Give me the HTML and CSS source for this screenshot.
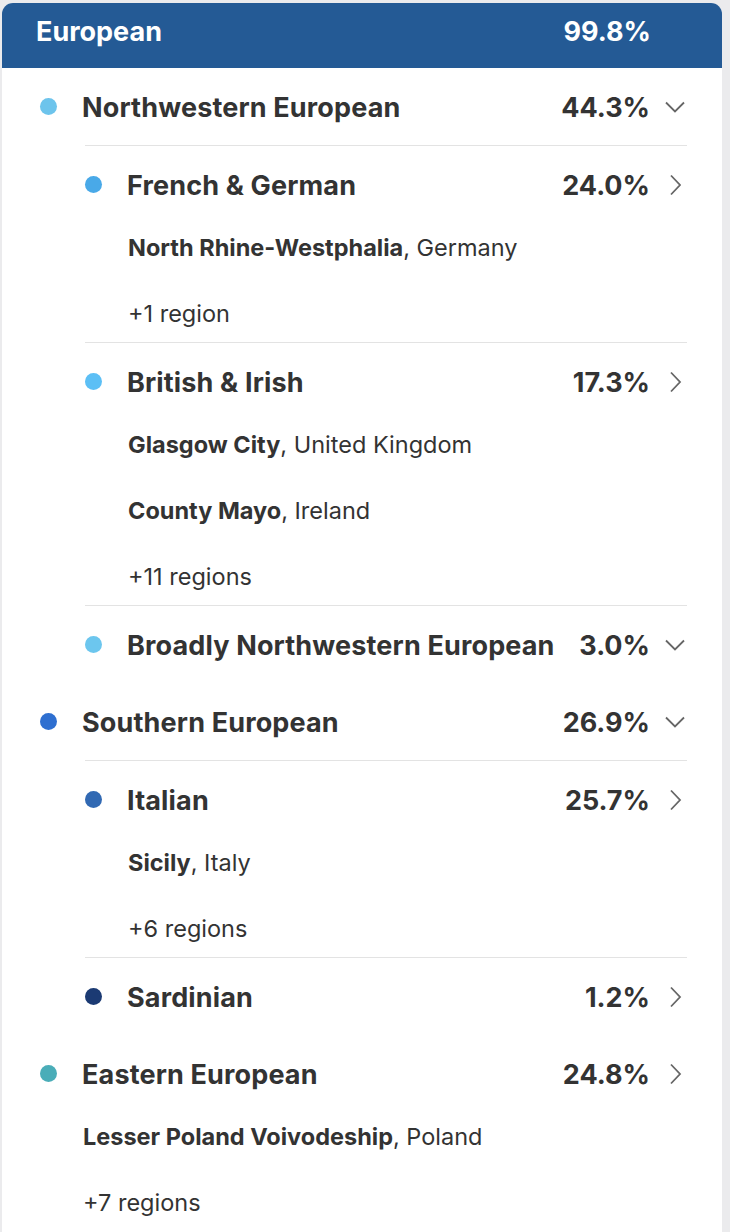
FILE: index.html
```html
<!DOCTYPE html>
<html lang="en">
<head>
  <meta charset="UTF-8">
  <title>Ethnicity Estimate - European</title>
  <link rel="stylesheet" href="styles.css">
</head>
<body>

<div class="ethnicity-card">
  <div class="card-header">
    <span class="header-name">European</span>
    <span class="header-percent">99.8%</span>
  </div>

  <div class="card-body">

    <div class="group">
      <div class="row">
        <span class="dot" style="background-color: #6dc4ec"></span>
        <span class="row-name">Northwestern European</span>
        <span class="row-percent">44.3%</span>
        <span class="chevron"><svg viewBox="0 0 24 24"><path d="M3 7.5l9 9 9-9"/></svg></span>
      </div>
      <div class="sub-list">
        <div class="sub-item">
          <div class="row">
            <span class="dot" style="background-color: #49a9e8"></span>
            <span class="row-name">French &amp; German</span>
            <span class="row-percent">24.0%</span>
            <span class="chevron"><svg viewBox="0 0 24 24"><path d="M8 2.5l9 9.5-9 9.5"/></svg></span>
          </div>
          <div class="regions">
            <div class="region"><b>North Rhine-Westphalia</b>, Germany</div>
            <div class="region">+1 region</div>
          </div>
        </div>
        <div class="sub-item">
          <div class="row">
            <span class="dot" style="background-color: #5cbff5"></span>
            <span class="row-name">British &amp; Irish</span>
            <span class="row-percent">17.3%</span>
            <span class="chevron"><svg viewBox="0 0 24 24"><path d="M8 2.5l9 9.5-9 9.5"/></svg></span>
          </div>
          <div class="regions">
            <div class="region"><b>Glasgow City</b>, United Kingdom</div>
            <div class="region"><b>County Mayo</b>, Ireland</div>
            <div class="region">+11 regions</div>
          </div>
        </div>
        <div class="sub-item">
          <div class="row">
            <span class="dot" style="background-color: #6cc6ee"></span>
            <span class="row-name">Broadly Northwestern European</span>
            <span class="row-percent">3.0%</span>
            <span class="chevron"><svg viewBox="0 0 24 24"><path d="M3 7.5l9 9 9-9"/></svg></span>
          </div>
        </div>
      </div>
    </div>

    <div class="group">
      <div class="row">
        <span class="dot" style="background-color: #2e6fd0"></span>
        <span class="row-name">Southern European</span>
        <span class="row-percent">26.9%</span>
        <span class="chevron"><svg viewBox="0 0 24 24"><path d="M3 7.5l9 9 9-9"/></svg></span>
      </div>
      <div class="sub-list">
        <div class="sub-item">
          <div class="row">
            <span class="dot" style="background-color: #3169b3"></span>
            <span class="row-name">Italian</span>
            <span class="row-percent">25.7%</span>
            <span class="chevron"><svg viewBox="0 0 24 24"><path d="M8 2.5l9 9.5-9 9.5"/></svg></span>
          </div>
          <div class="regions">
            <div class="region"><b>Sicily</b>, Italy</div>
            <div class="region">+6 regions</div>
          </div>
        </div>
        <div class="sub-item">
          <div class="row">
            <span class="dot" style="background-color: #1b3a73"></span>
            <span class="row-name">Sardinian</span>
            <span class="row-percent">1.2%</span>
            <span class="chevron"><svg viewBox="0 0 24 24"><path d="M8 2.5l9 9.5-9 9.5"/></svg></span>
          </div>
        </div>
      </div>
    </div>

    <div class="group">
      <div class="row">
        <span class="dot" style="background-color: #4aadb8"></span>
        <span class="row-name">Eastern European</span>
        <span class="row-percent">24.8%</span>
        <span class="chevron"><svg viewBox="0 0 24 24"><path d="M8 2.5l9 9.5-9 9.5"/></svg></span>
      </div>
      <div class="regions">
        <div class="region"><b>Lesser Poland Voivodeship</b>, Poland</div>
        <div class="region">+7 regions</div>
      </div>
    </div>

  </div>
</div>

</body>
</html>
```

FILE: styles.css
```css
body {
  margin: 0;
  padding: 3px 8px 0 2px;
  font-family: Inter, 'Noto Sans', sans-serif;
  background-color: #ebebed;
  color: #333;
  height: 1232px;
  box-sizing: border-box;
  overflow: hidden;
}

.ethnicity-card {
  background-color: #fff;
  border-radius: 11px 11px 0 0;
  height: 100%;
  overflow: hidden;
}

.card-header {
  background-color: #245a95;
  color: #fff;
  height: 65px;
  display: flex;
  align-items: center;
  justify-content: space-between;
  padding: 0 71px 9px 34px;
  box-sizing: border-box;
  font-size: 27px;
  font-weight: 700;
}

.card-body {
  padding: 0 35px 0 38px;
}

.row {
  display: flex;
  align-items: center;
  height: 77px;
}

.dot {
  width: 17px;
  height: 17px;
  border-radius: 50%;
  flex-shrink: 0;
  margin-right: 25px;
}

.row-name {
  flex: 1;
  padding-top: 2px;
  font-size: 27px;
  font-weight: 700;
  letter-spacing: 0.15px;
  color: #333;
  white-space: nowrap;
}

.row-percent {
  padding-top: 2px;
  font-size: 27px;
  font-weight: 700;
  color: #333;
}

.chevron {
  width: 24px;
  height: 24px;
  margin-left: 13px;
  display: flex;
}

.chevron svg {
  width: 24px;
  height: 24px;
  fill: none;
  stroke: #666;
  stroke-width: 1.8;
}

.sub-list {
  margin-left: 45px;
  border-top: 1px solid #e3e3e3;
}

.sub-item + .sub-item {
  border-top: 1px solid #e3e3e3;
}

.regions {
  padding: 3px 0 6px 43px;
  display: flex;
  flex-direction: column;
  gap: 22px;
}

.region {
  font-size: 23.5px;
  line-height: 44px;
  color: #333;
  white-space: nowrap;
}

.region b {
  font-weight: 700;
}
```
